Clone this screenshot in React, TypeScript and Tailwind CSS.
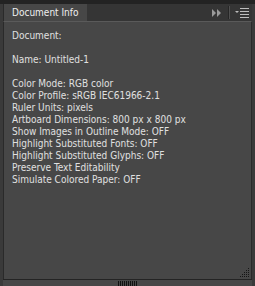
import React from "react";

const lines: string[] = [
  "Document:",
  "",
  "Name: Untitled-1",
  "",
  "Color Mode: RGB color",
  "Color Profile: sRGB IEC61966-2.1",
  "Ruler Units: pixels",
  "Artboard Dimensions: 800 px x 800 px",
  "Show Images in Outline Mode: OFF",
  "Highlight Substituted Fonts: OFF",
  "Highlight Substituted Glyphs: OFF",
  "Preserve Text Editability",
  "Simulate Colored Paper: OFF",
];

function Grip() {
  const dots: [number, number][] = [];
  for (let r = 0; r < 5; r++) {
    for (let c = 0; c <= r; c++) {
      dots.push([8 - c * 2, r * 2]);
    }
  }
  return (
    <svg width="10" height="10" viewBox="0 0 10 10" className="block">
      {dots.map(([x, y], i) => (
        <rect key={i} x={x} y={y} width="1" height="1" fill="#151515" />
      ))}
    </svg>
  );
}

export default function App() {
  return (
    <div
      className="w-[255px] h-[286px] bg-[#2e2e2e] flex flex-col overflow-hidden font-stretch-condensed"
      style={{ fontFamily: '"DejaVu Sans Condensed", "DejaVu Sans", Tahoma, sans-serif' }}
    >
      <div className="h-[4px] bg-[#232323]" />
      <div className="flex-1 flex flex-col pl-[3px] pr-[3px] bg-[#3a3a3a]">
        {/* header */}
        <div className="h-[17px] flex items-stretch bg-[#353535]">
          <div className="w-[84px] bg-[#474747] border-l border-[#2a2a2a] text-[#efefef] text-[10px] leading-[17px] pl-[8px] whitespace-nowrap">
            Document Info
          </div>
          <div className="flex-1 flex items-center justify-end pr-[3px]">
            <svg width="10" height="8" viewBox="0 0 10 8" className="block">
              <polygon points="0,0 4,4 0,8" fill="#9a9a9a" />
              <polygon points="5,0 9,4 5,8" fill="#9a9a9a" />
            </svg>
            <div className="flex h-[13px] ml-[6px] mr-[5px]">
              <div className="w-[1px] bg-[#262626]" />
              <div className="w-[1px] bg-[#505050]" />
            </div>
            <svg width="14" height="10" viewBox="0 0 14 10" className="block">
              <polygon points="0,3 4,3 2,5" fill="#bdbdbd" />
              <rect x="5" y="0" width="9" height="1" fill="#bdbdbd" />
              <rect x="5" y="3" width="9" height="1" fill="#bdbdbd" />
              <rect x="5" y="6" width="9" height="1" fill="#bdbdbd" />
              <rect x="5" y="9" width="9" height="1" fill="#bdbdbd" />
            </svg>
          </div>
        </div>
        {/* body */}
        <div className="flex-1 bg-[#474747] border-l border-r border-t border-[#2a2a2a] border-t-[#5a5a5a] flex flex-col">
          <div className="flex-1 pl-[8px] pt-[8px] text-[#e0e0e0] text-[10px] leading-[12px]">
            {lines.map((l, i) => (
              <div key={i} className="h-[12px] whitespace-nowrap">
                {l}
              </div>
            ))}
          </div>
          <div className="flex justify-end pr-[1px] pb-[1px]">
            <Grip />
          </div>
        </div>
        <div className="h-[1px] bg-[#242424]" />
        <div className="h-[6px] bg-[#474747] flex justify-center">
          <div className="flex gap-[1px] mt-[1px]">
            {Array.from({ length: 10 }).map((_, i) => (
              <div key={i} className="w-[1px] h-[5px] bg-[#111]" />
            ))}
          </div>
        </div>
      </div>
    </div>
  );
}
